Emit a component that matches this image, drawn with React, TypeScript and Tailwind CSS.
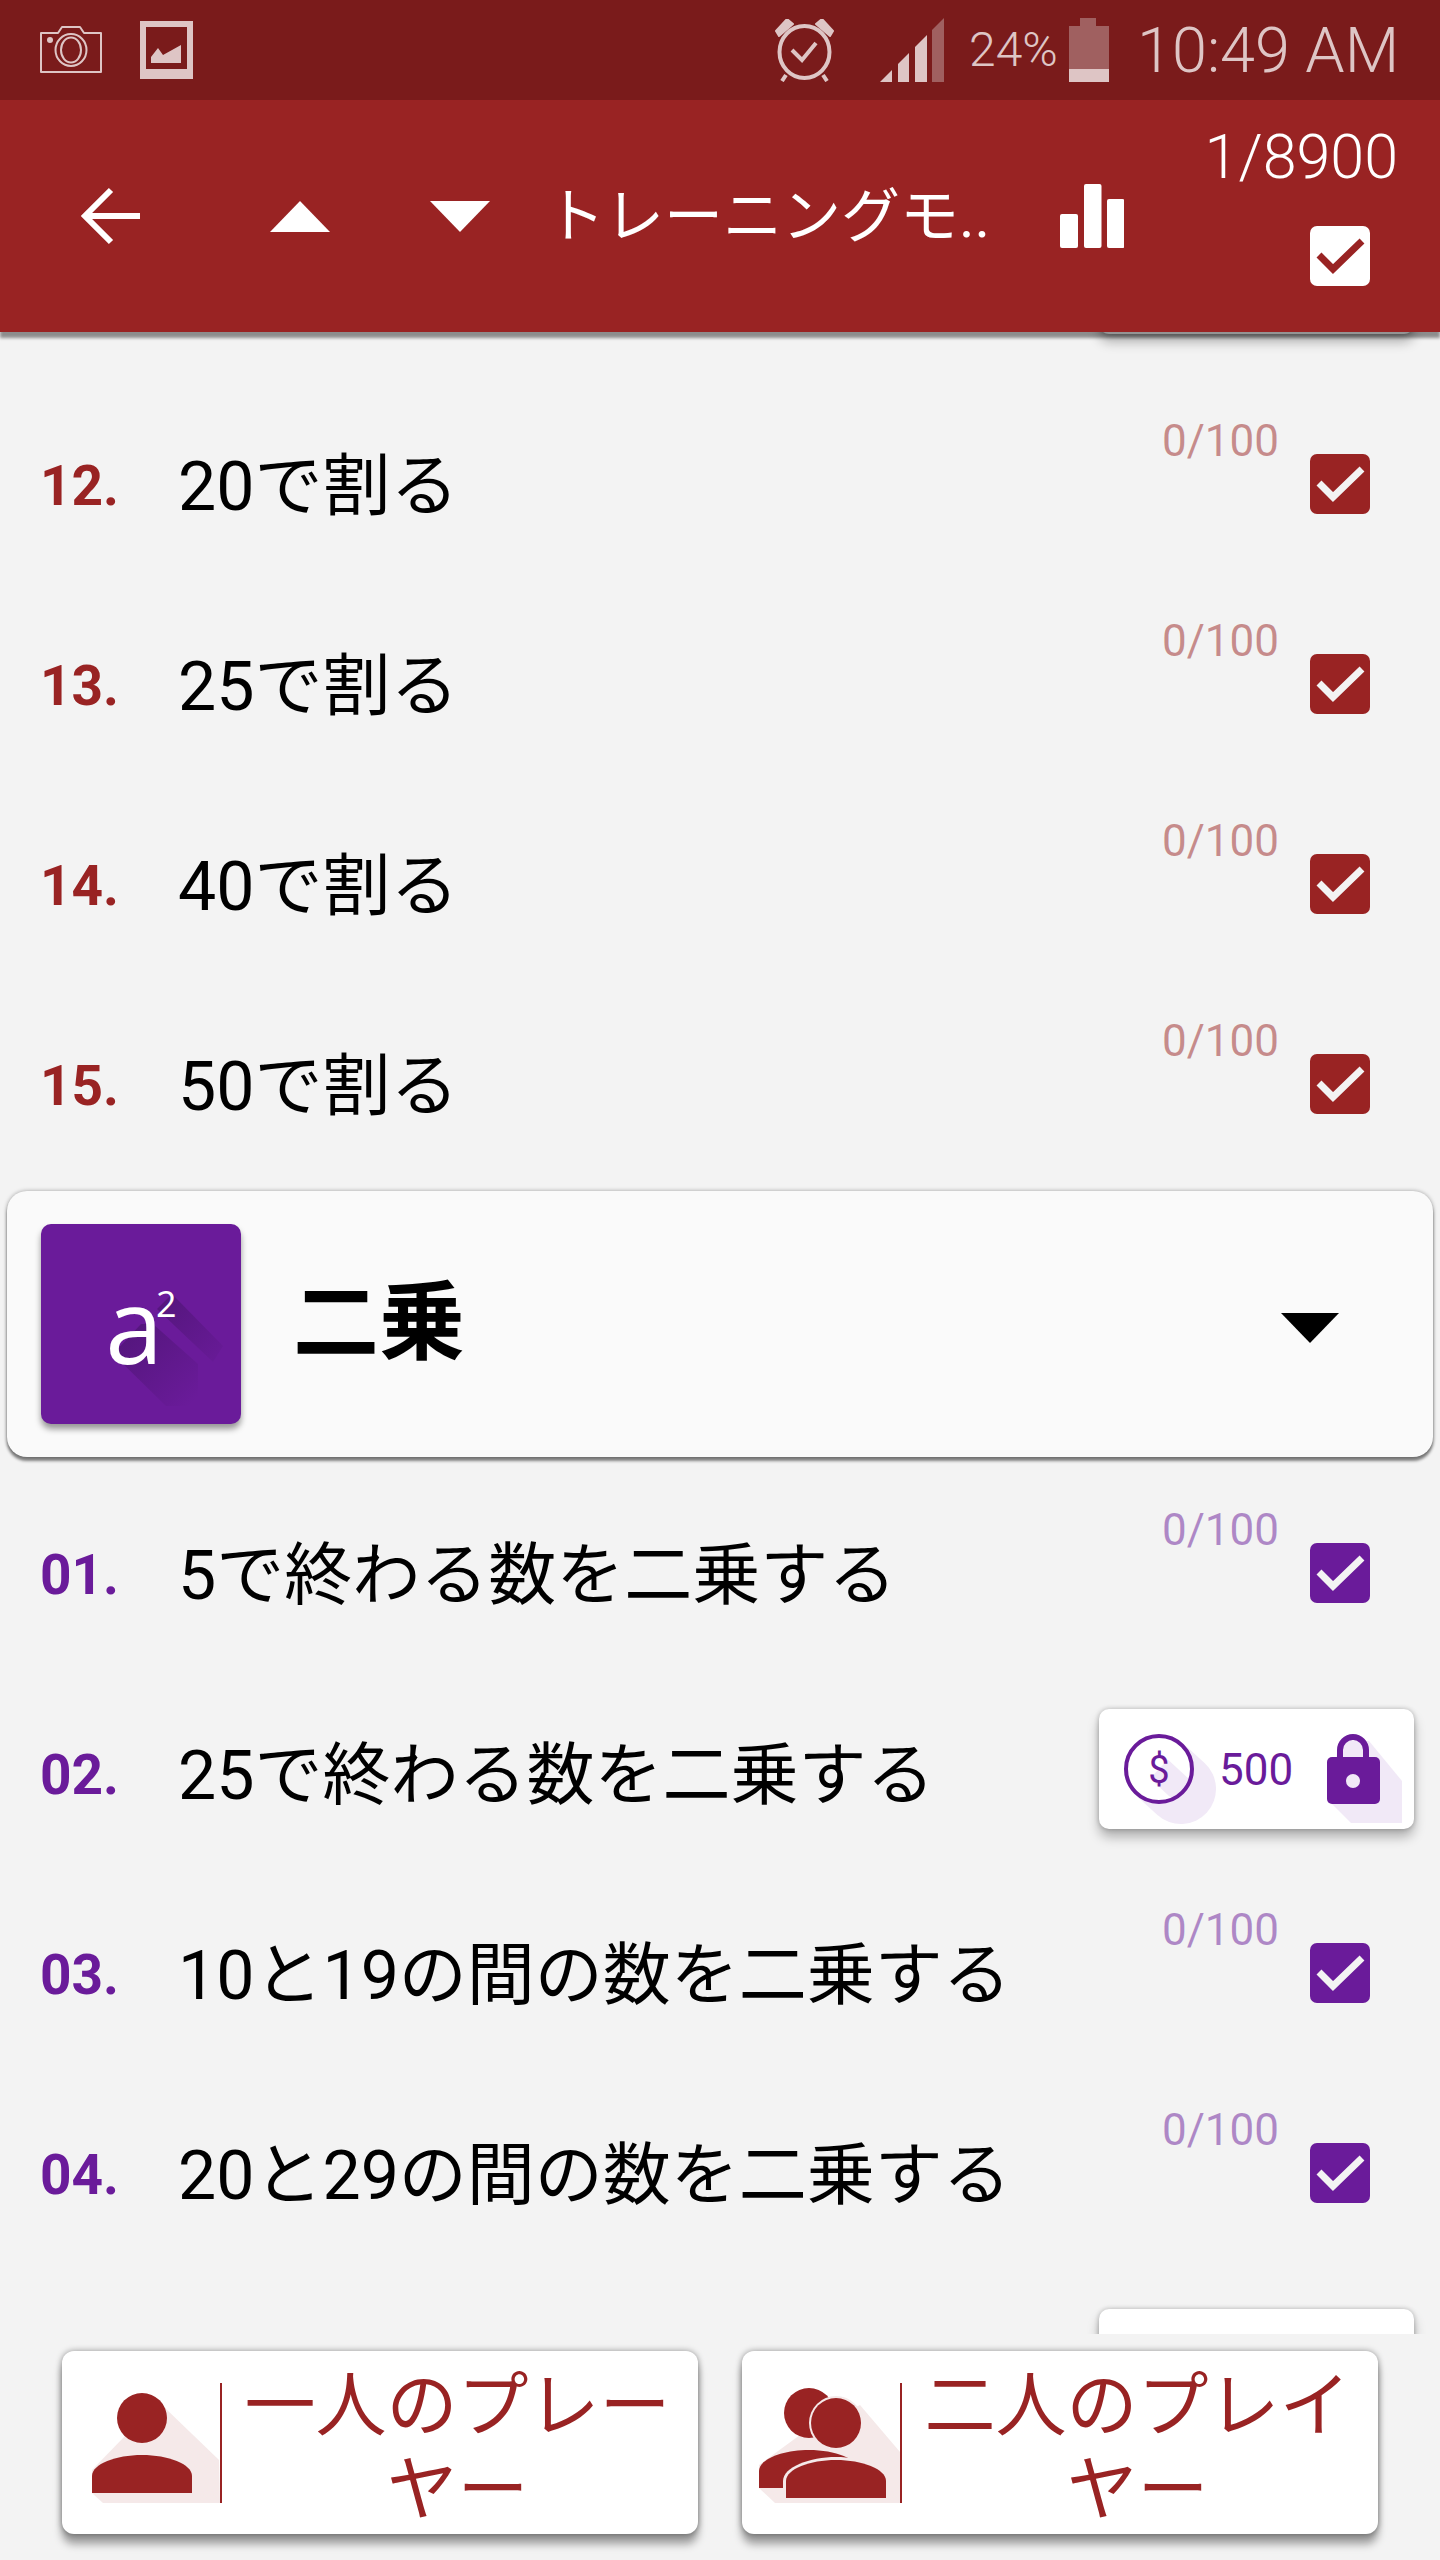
import React from "react";

type Theme = { num: string; score: string; box: string; fill: string };
const red: Theme = { num: "text-[#992323]", score: "text-[#992323]/50", box: "bg-[#992323]", fill: "#992323" };
const purple: Theme = { num: "text-[#6a1b9a]", score: "text-[#6a1b9a]/50", box: "bg-[#6a1b9a]", fill: "#6a1b9a" };

function Check({ bg, stroke }: { bg: string; stroke: string }) {
  return (
    <div className={`w-[60px] h-[60px] rounded-[7px] shrink-0 ${bg}`}>
      <svg viewBox="0 0 60 60" className="w-[60px] h-[60px] block">
        <polyline points="9,29 23,43 52,15" fill="none" stroke={stroke} strokeWidth="7" />
      </svg>
    </div>
  );
}

function LockCard({ className }: { className: string }) {
  return (
    <div className={`relative w-[315px] h-[120px] bg-white rounded-[10px] shadow-[0_8px_12px_rgba(0,0,0,0.28),0_0_5px_rgba(0,0,0,0.25)] shrink-0 ${className}`}>
      <svg viewBox="0 0 315 120" className="absolute inset-0 w-[315px] h-[120px]">
        <line x1="60" y1="60" x2="82" y2="80" stroke="#f1e9f7" strokeWidth="70" strokeLinecap="round" />
        <circle cx="60" cy="60" r="33" fill="#fff" />
        <line x1="60" y1="60" x2="88" y2="86" stroke="#f1e9f7" strokeWidth="26" />
        <circle cx="60" cy="60" r="33" fill="none" stroke="#6a1b9a" strokeWidth="4" />
        <polygon points="230,92 252,114 303,114 303,72 270,32 240,32" fill="#f1e9f7" />
        <path d="M241 50 V41 a13 13 0 0 1 26 0 V50" fill="none" stroke="#6a1b9a" strokeWidth="6" />
        <rect x="228" y="48" width="53" height="47" rx="5" fill="#6a1b9a" />
        <circle cx="254" cy="72" r="7" fill="#f1e9f7" />
      </svg>
      <div className="relative flex items-center h-full pl-[25px] pt-[2px]">
        <span className="w-[70px] text-center text-[38px] leading-none text-[#6a1b9a]">$</span>
        <span className="ml-[25px] text-[44px] leading-none text-[#6a1b9a]">500</span>
      </div>
    </div>
  );
}

function Row({ n, text, theme, locked }: { n: string; text: string; theme: Theme; locked?: boolean }) {
  return (
    <div className="h-[200px] flex items-center pl-[40px]">
      <span className={`w-[138px] shrink-0 text-[55px] font-bold leading-none mt-[5px] ${theme.num}`}>{n}</span>
      <span className="flex-1 text-[68px] leading-none text-black whitespace-nowrap mt-[6px]">{text}</span>
      {locked ? (
        <LockCard className="mb-[8px] mr-[26px]" />
      ) : (
        <>
          <span className={`mb-[87px] mr-[31px] text-[44px] leading-none ${theme.score}`}>0/100</span>
          <div className="mr-[70px]">
            <Check bg={theme.box} stroke="#f3f3f3" />
          </div>
        </>
      )}
    </div>
  );
}

function ClippedCardRow({ className }: { className: string }) {
  return (
    <div className="h-[200px] flex items-center justify-end">
      <div className={`w-[315px] h-[120px] bg-white rounded-[10px] shadow-[0_8px_12px_rgba(0,0,0,0.28),0_0_5px_rgba(0,0,0,0.25)] shrink-0 ${className}`} />
    </div>
  );
}

function StatusBar() {
  const c = "#dec5c5";
  return (
    <div className="h-[100px] bg-[#7a1b1b] flex items-center shrink-0">
      <svg viewBox="40 20 160 60" className="w-[160px] h-[60px] ml-[40px] shrink-0">
        <path d="M41 33 H58 L62 27 H80 L84 33 H101 V72 H41 Z" fill="none" stroke={c} strokeWidth="2" strokeLinejoin="round" />
        <ellipse cx="71" cy="50" rx="15.5" ry="16" fill="none" stroke={c} strokeWidth="2" />
        <ellipse cx="71" cy="50" rx="10" ry="12.5" fill="none" stroke={c} strokeWidth="2" />
        <circle cx="50" cy="40" r="3" fill={c} />
        <path d="M140 21 H193 V79 H140 Z M146 27 V69 H187 V27 Z" fill={c} fillRule="evenodd" />
        <polygon points="151,63 151,57 158,48 163,55 181,45 181,63" fill={c} />
      </svg>
      <svg viewBox="775 19 59 63" className="w-[59px] h-[63px] ml-[575px] shrink-0">
        <ellipse cx="804.5" cy="52" rx="25" ry="26" fill="none" stroke={c} strokeWidth="4" />
        <polyline points="792,50 802,60 816,43" fill="none" stroke={c} strokeWidth="4" />
        <path d="M776 31 L787 19 L793 24 L779 36 Z M833 31 L822 19 L816 24 L830 36 Z" fill={c} strokeLinejoin="round" stroke={c} strokeWidth="2" />
        <path d="M786 75 L782 81 M823 75 L827 81" stroke={c} strokeWidth="4" />
      </svg>
      <svg viewBox="880 18 64 64" className="w-[64px] h-[64px] ml-[46px] shrink-0">
        <polygon points="880,82 892,70 892,82" fill={c} />
        <polygon points="898,82 898,64 909,53 909,82" fill={c} />
        <polygon points="915,82 915,47 927,35 927,82" fill={c} />
        <polygon points="932,82 932,30 944,18 944,82" fill="#a06060" />
      </svg>
      <span className="ml-[25px] w-[100px] text-[48px] font-light leading-none text-[#dec5c5] shrink-0 whitespace-nowrap">24%</span>
      <svg viewBox="1069 17 40 64" className="w-[40px] h-[64px] shrink-0">
        <path d="M1080 17 H1096 V25 H1109 V68 H1069 V25 H1080 Z" fill="#a06060" />
        <rect x="1069" y="68" width="40" height="13" fill={c} />
      </svg>
      <span className="ml-[28px] text-[63px] font-light leading-none text-[#dec5c5] whitespace-nowrap">10:49 AM</span>
    </div>
  );
}

function AppBar() {
  return (
    <div className="relative z-10 h-[232px] bg-[#992323] flex items-center shrink-0 shadow-[0_6px_3px_rgba(0,0,0,0.42)]">
      <svg viewBox="80 186 62 60" className="w-[62px] h-[60px] ml-[80px] shrink-0">
        <path d="M140 216 H86 M111 190 L85 216 L111 242" fill="none" stroke="#fff" strokeWidth="6" />
      </svg>
      <svg viewBox="0 0 60 31" className="w-[60px] h-[31px] ml-[128px] shrink-0">
        <polygon points="30,0 60,31 0,31" fill="#fff" />
      </svg>
      <svg viewBox="0 0 60 31" className="w-[60px] h-[31px] ml-[100px] shrink-0">
        <polygon points="0,0 60,0 30,31" fill="#fff" />
      </svg>
      <span className="ml-[56px] w-[514px] shrink-0 text-[59px] leading-none text-white whitespace-nowrap">トレーニングモ..</span>
      <svg viewBox="1060 184 64 64" className="w-[64px] h-[64px] shrink-0">
        <rect x="1060" y="214" width="18" height="34" rx="2" fill="#fff" />
        <rect x="1084" y="184" width="17.5" height="64" rx="2" fill="#fff" />
        <rect x="1107" y="199" width="17.5" height="49" rx="2" fill="#fff" />
      </svg>
      <div className="ml-auto mr-[42px] self-start pt-[27px] flex flex-col items-end">
        <span className="text-[61px] leading-[60px] font-light text-white">1/8900</span>
        <div className="mt-[39px] mr-[28px]">
          <Check bg="bg-white" stroke="#992323" />
        </div>
      </div>
    </div>
  );
}

function CategoryCard() {
  return (
    <div className="mt-[7px] mb-[16px] mx-[7px] h-[266px] rounded-[20px] bg-[#fafafa] flex items-center pl-[34px] shadow-[0_4px_3px_rgba(0,0,0,0.45),0_0_4px_rgba(0,0,0,0.35)]">
      <div className="relative w-[200px] h-[200px] rounded-[10px] bg-[#6a1b9a] shrink-0 flex items-start justify-center shadow-[0_5px_6px_rgba(0,0,0,0.4)] overflow-hidden">
        <svg viewBox="0 0 200 200" className="absolute inset-0 w-[200px] h-[200px]">
          <defs>
            <linearGradient id="tileFade" gradientUnits="userSpaceOnUse" x1="90" y1="90" x2="165" y2="165">
              <stop offset="0" stopColor="#3f1160" stopOpacity="0.55" />
              <stop offset="1" stopColor="#3f1160" stopOpacity="0" />
            </linearGradient>
          </defs>
          <polygon points="72,130 125,182 157,182 157,140 112,100 100,100" fill="url(#tileFade)" />
          <polygon points="116,85 172,138 182,122 131,70" fill="url(#tileFade)" />
        </svg>
        <span className="relative font-['Open_Sans',sans-serif] font-medium text-white text-[104px] leading-none mt-[48px]">a</span>
        <span className="relative font-['Open_Sans',sans-serif] text-white text-[36px] leading-none mt-[62px] ml-[-7px]">2</span>
      </div>
      <span className="ml-[52px] text-[86px] font-bold leading-none text-black">二乗</span>
      <svg viewBox="0 0 58 30" className="w-[58px] h-[30px] ml-auto mr-[94px] mt-[8px] shrink-0">
        <polygon points="0,0 58,0 29,30" fill="#000" />
      </svg>
    </div>
  );
}

function PlayerButton({ label, children, box }: { label: string; children: React.ReactNode; box: string }) {
  return (
    <div className="w-[636px] h-[183px] rounded-[12px] bg-white flex items-center shadow-[0_10px_8px_rgba(0,0,0,0.36),0_0_6px_rgba(0,0,0,0.4)] shrink-0">
      <svg viewBox={box} className="w-[158px] h-[120px] shrink-0 mt-[1px]">
        {children}
      </svg>
      <div className="w-[2px] h-[120px] bg-[#992323] shrink-0 mt-[1px]" />
      <div className="flex-1 text-center text-[71px] leading-[84px] text-[#992323] pl-[1px] pr-[6px] pt-[10px]">{label}</div>
    </div>
  );
}

export default function App() {
  return (
    <div className="w-[1440px] h-[2560px] flex flex-col bg-[#f3f3f3] overflow-hidden font-[Roboto,'Noto_Sans_CJK_JP',sans-serif]">
      <StatusBar />
      <AppBar />
      <div className="h-[2002px] overflow-hidden shrink-0">
        <div className="-mt-[148px]">
          <ClippedCardRow className="mb-[20px] mr-[26px]" />
          <Row n="12." text="20で割る" theme={red} />
          <Row n="13." text="25で割る" theme={red} />
          <Row n="14." text="40で割る" theme={red} />
          <Row n="15." text="50で割る" theme={red} />
          <CategoryCard />
          <Row n="01." text="5で終わる数を二乗する" theme={purple} />
          <Row n="02." text="25で終わる数を二乗する" theme={purple} locked />
          <Row n="03." text="10と19の間の数を二乗する" theme={purple} />
          <Row n="04." text="20と29の間の数を二乗する" theme={purple} />
          <ClippedCardRow className="mb-[8px] mr-[26px]" />
        </div>
      </div>
      <div className="flex-1 flex gap-[44px] pl-[62px] pt-[17px] bg-[#f3f3f3]">
        <PlayerButton label="一人のプレーヤー" box="62 2383 158 120">
          <polygon points="164,2407 219,2460 220,2503 103,2503 92,2493 92,2470 125,2436" fill="#f5e9e9" />
          <ellipse cx="142" cy="2418" rx="25" ry="25" fill="#992323" />
          <path d="M92 2493 V2476 C92 2464 116 2455 142 2455 S192 2464 192 2476 V2493 Z" fill="#992323" />
        </PlayerButton>
        <PlayerButton label="二人のプレイヤー" box="742 2383 158 120">
          <polygon points="860,2405 900,2452 900,2503 775,2503 759,2488 759,2465 800,2435" fill="#f5e9e9" />
          <ellipse cx="809" cy="2413" rx="25" ry="25" fill="#992323" />
          <path d="M759 2488 V2471 C759 2459 783 2450 809 2450 S859 2459 859 2471 V2488 Z" fill="#992323" />
          <ellipse cx="836" cy="2423" rx="27" ry="27" fill="#f5e9e9" />
          <ellipse cx="836" cy="2423" rx="25" ry="25" fill="#992323" />
          <path d="M783 2500 V2481 C783 2467 810 2457 836 2457 S889 2467 889 2481 V2500 Z" fill="#f5e9e9" />
          <path d="M786 2498 V2481 C786 2469 810 2460 836 2460 S886 2469 886 2481 V2498 Z" fill="#992323" />
        </PlayerButton>
      </div>
    </div>
  );
}
